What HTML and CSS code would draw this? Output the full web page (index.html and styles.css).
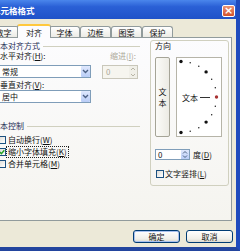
FILE: index.html
```html
<!DOCTYPE html>
<html lang="zh-CN">
<head>
    <meta charset="UTF-8">
    <meta name="viewport" content="width=device-width, initial-scale=1.0">
    <title>单元格格式</title>
    <link rel="stylesheet" href="styles.css">
</head>
<body>
<div class="dialog">
    <div class="titlebar">
        <span class="title">单元格格式</span>
        <span class="close">×</span>
    </div>

    <div class="tabs">
        <div class="tab">数字</div>
        <div class="tab active">对齐</div>
        <div class="tab">字体</div>
        <div class="tab">边框</div>
        <div class="tab">图案</div>
        <div class="tab">保护</div>
    </div>

    <div class="panel">
        <div class="left">
            <div class="section">文本对齐方式</div>
            <div class="pair">
                <div class="col-a label indent">水平对齐(<u>H</u>):</div>
                <div class="label disabled">缩进(<u>I</u>):</div>
            </div>
            <div class="pair field-row">
                <div class="col-a">
                    <div class="select">
                        <span class="value">常规</span>
                        <span class="drop"><svg width="9" height="11" viewBox="0 0 9 11"><path d="M2 4 L4.5 6.5 L7 4" fill="none" stroke="#4d6185" stroke-width="1.4"/></svg></span>
                    </div>
                </div>
                <div class="spin indent-spin disabled">
                    <span class="value">0</span>
                    <span class="arrows">
                        <svg width="8" height="12" viewBox="0 0 8 12"><path d="M2 4 L4 2 L6 4 M2 8 L4 10 L6 8" fill="none" stroke="#b8b5a6" stroke-width="1"/></svg>
                    </span>
                </div>
            </div>
            <div class="label indent vlabel">垂直对齐(<u>V</u>):</div>
            <div class="select">
                <span class="value">居中</span>
                <span class="drop"><svg width="9" height="11" viewBox="0 0 9 11"><path d="M2 4 L4.5 6.5 L7 4" fill="none" stroke="#4d6185" stroke-width="1.4"/></svg></span>
            </div>

            <div class="section control">文本控制</div>
            <div class="check">
                <span class="box"></span>
                <span class="text">自动换行(<u>W</u>)</span>
            </div>
            <div class="check">
                <span class="box"><svg width="6" height="6" viewBox="0 0 6 6"><path d="M0.8 3 L2.4 4.6 L5.3 1.2" fill="none" stroke="#21a121" stroke-width="1.4"/></svg></span>
                <span class="text focus">缩小字体填充(<u>K</u>)</span>
            </div>
            <div class="check">
                <span class="box"></span>
                <span class="text">合并单元格(<u>M</u>)</span>
            </div>
        </div>

        <div class="orient">
            <div class="label">方向</div>
            <div class="dial-row">
                <div class="vertical"><span>文</span><span>本</span></div>
                <div class="dial">
                    <svg width="44" height="78" viewBox="0 0 44 78">
                        <circle cx="4" cy="3.5" r="1.7" fill="#111"/>
                        <circle cx="13.2" cy="4.7" r="0.7" fill="#111"/>
                        <circle cx="21.8" cy="8.3" r="0.7" fill="#111"/>
                        <circle cx="29.1" cy="13.9" r="1.7" fill="#111"/>
                        <circle cx="34.7" cy="21.3" r="0.7" fill="#111"/>
                        <circle cx="38.3" cy="29.8" r="0.7" fill="#111"/>
                        <circle cx="39.5" cy="39" r="1.7" fill="#a83232"/>
                        <circle cx="38.3" cy="48.2" r="0.7" fill="#111"/>
                        <circle cx="34.7" cy="56.7" r="0.7" fill="#111"/>
                        <circle cx="29.1" cy="64.1" r="1.7" fill="#111"/>
                        <circle cx="21.8" cy="69.7" r="0.7" fill="#111"/>
                        <circle cx="13.2" cy="73.3" r="0.7" fill="#111"/>
                        <circle cx="4" cy="74.5" r="1.7" fill="#111"/>
                        <text x="5" y="42.5" font-size="8" font-family="Noto Sans CJK SC, sans-serif" fill="#111">文本</text>
                        <line x1="23" y1="39.5" x2="33" y2="39.5" stroke="#333" stroke-width="1"/>
                    </svg>
                </div>
            </div>
            <div class="degree-row">
                <div class="spin degree">
                    <span class="value">0</span>
                    <span class="arrows blue">
                        <svg width="8" height="9" viewBox="0 0 8 9"><path d="M2 3.5 L4 1.5 L6 3.5 M2 5.5 L4 7.5 L6 5.5" fill="none" stroke="#4d6185" stroke-width="1"/></svg>
                    </span>
                </div>
                <span class="label">度(<u>D</u>)</span>
            </div>
            <div class="check vcheck">
                <span class="box"></span>
                <span class="text">文字竖排(<u>L</u>)</span>
            </div>
        </div>
    </div>

    <div class="buttons">
        <button class="btn default">确定</button>
        <button class="btn">取消</button>
    </div>
</div>
</body>
</html>
```

FILE: styles.css
```css
html, body {
    margin: 0;
    padding: 0;
}

body {
    width: 240px;
    height: 251px;
    overflow: hidden;
    background: #ece9d8;
    font-family: "Noto Sans CJK SC", sans-serif;
    font-size: 8px;
    color: #111;
}

u {
    text-decoration: underline;
}

.dialog {
    width: 252px;
    height: 251px;
    margin-left: -12px;
    box-sizing: border-box;
    border-right: 4px solid #1f4bbd;
    border-bottom: 4px solid #23459e;
    background: #ece9d8;
    display: flex;
    flex-direction: column;
}

/* title bar */
.titlebar {
    height: 19px;
    flex: none;
    display: flex;
    align-items: center;
    justify-content: space-between;
    padding: 0 1px 0 4px;
    background: linear-gradient(#4a86ec, #2a60d6 35%, #1f52c8);
}

.title {
    color: #fff;
    font-weight: bold;
    font-size: 8.5px;
}

.close {
    width: 11px;
    height: 10px;
    margin-top: 2px;
    border: 1px solid #fff;
    border-radius: 2px;
    background: linear-gradient(#ec9474, #d2512c);
    color: #fff;
    font-family: "DejaVu Sans", sans-serif;
    font-size: 11px;
    font-weight: bold;
    line-height: 10px;
    text-align: center;
}

/* tabs */
.tabs {
    display: flex;
    align-items: flex-end;
    height: 13px;
    margin-top: 5px;
    flex: none;
    position: relative;
    z-index: 1;
}

.tab {
    height: 10px;
    line-height: 11px;
    padding: 0 6.5px;
    border: 1px solid #919b9c;
    border-bottom: none;
    border-radius: 3px 3px 0 0;
    background: linear-gradient(#ffffff, #ecebe5);
}

.tab.active {
    height: 10px;
    padding: 2px 8px 0;
    line-height: 10px;
    margin: 0 -2px -1px;
    border-top: 2px solid #ffc83c;
    background: #fcfcfe;
    position: relative;
    z-index: 2;
}

/* panel */
.panel {
    margin-left: 3px;
    margin-right: 4px;
    height: 184px;
    flex: none;
    box-sizing: border-box;
    border: 1px solid #919b9c;
    background: linear-gradient(#fcfcfe, #f5f4ef);
    display: flex;
    align-items: flex-start;
}

.left {
    width: 158px;
    flex: none;
    padding-right: 10px;
    box-sizing: border-box;
}

.section {
    display: flex;
    align-items: center;
    margin-top: 3px;
    line-height: 10px;
    color: #1d2c55;
}

.section::after {
    content: "";
    flex: 1;
    margin-left: 3px;
    border-top: 1px solid #d0d0bf;
}

.section.control {
    margin-top: 18px;
}

.label {
    line-height: 10px;
    white-space: nowrap;
}

.indent {
    padding-left: 8px;
}

.disabled {
    color: #aca899;
}

.pair {
    display: flex;
}

.col-a {
    width: 110px;
    flex: none;
}

.field-row {
    margin-top: 4px;
}

.vlabel {
    margin-top: 1px;
}

/* combo boxes */
.select {
    width: 93px;
    height: 13px;
    margin-left: 6px;
    box-sizing: border-box;
    border: 1px solid #7f9db9;
    background: #fff;
    display: flex;
    justify-content: space-between;
}

.select .value {
    padding-left: 3px;
    line-height: 11px;
}

.drop {
    width: 9px;
    border-radius: 1px;
    background: linear-gradient(#dfe8fd, #b9cdf7);
    display: flex;
}

/* spinners */
.spin {
    box-sizing: border-box;
    border: 1px solid #7f9db9;
    background: #fff;
    display: flex;
    justify-content: space-between;
}

.spin .value {
    padding-left: 2px;
    line-height: 10px;
}

.indent-spin {
    width: 36px;
    height: 14px;
    border-color: #c9c7ba;
    background: #f6f5ef;
}

.indent-spin .value {
    line-height: 12px;
    padding-left: 3px;
}

.arrows {
    width: 8px;
    display: flex;
    background: #f0efe8;
}

.arrows.blue {
    background: linear-gradient(#dfe8fd, #b9cdf7);
}

/* checkboxes */
.check {
    display: flex;
    align-items: center;
    height: 12px;
    padding-left: 6px;
}

.section.control + .check {
    margin-top: 2.5px;
}

.box {
    width: 8px;
    height: 8px;
    flex: none;
    box-sizing: border-box;
    border: 1px solid #1c5180;
    background: linear-gradient(135deg, #dcdcd7, #ffffff);
    display: flex;
}

.check .text {
    margin-left: 2px;
    line-height: 10px;
    white-space: nowrap;
}

.check .focus {
    margin-left: 1px;
    padding: 0 1px;
    outline: 1px dotted #222;
}

/* orientation group */
.orient {
    width: 79px;
    height: 146px;
    flex: none;
    margin-top: 2px;
    box-sizing: border-box;
    border: 1px solid #d0d0bf;
    border-radius: 3px;
    padding-left: 4px;
}

.dial-row {
    display: flex;
    gap: 6px;
    margin-top: 6px;
    height: 80px;
}

.vertical {
    width: 15px;
    box-sizing: border-box;
    border: 1px solid #a5a497;
    border-radius: 2px;
    background: linear-gradient(90deg, #fbfbf8, #ecebe4);
    display: flex;
    flex-direction: column;
    align-items: center;
    justify-content: center;
    line-height: 11px;
}

.dial {
    width: 46px;
    box-sizing: border-box;
    border: 1px solid #b6b4a8;
    background: #fff;
    display: flex;
}

.degree-row {
    display: flex;
    align-items: center;
    gap: 3px;
    margin-top: 12px;
}

.degree {
    width: 35px;
    height: 11px;
}

.degree .value {
    line-height: 9px;
}

.vcheck {
    margin-top: 8px;
    padding-left: 1px;
}

.vcheck .text {
    margin-left: 1px;
}

/* buttons */
.buttons {
    display: flex;
    justify-content: flex-end;
    gap: 6px;
    margin-top: 9px;
    margin-right: 3px;
}

.btn {
    width: 47px;
    height: 13px;
    padding: 0;
    border: 1px solid #003c74;
    border-radius: 3px;
    background: linear-gradient(#ffffff, #f0efe9 70%, #dcdad0);
    font-family: "Noto Sans CJK SC", sans-serif;
    font-size: 8px;
    line-height: 11px;
    color: #111;
}

.btn.default {
    box-shadow: inset 0 0 0 1px #a9c1ee;
}
```
